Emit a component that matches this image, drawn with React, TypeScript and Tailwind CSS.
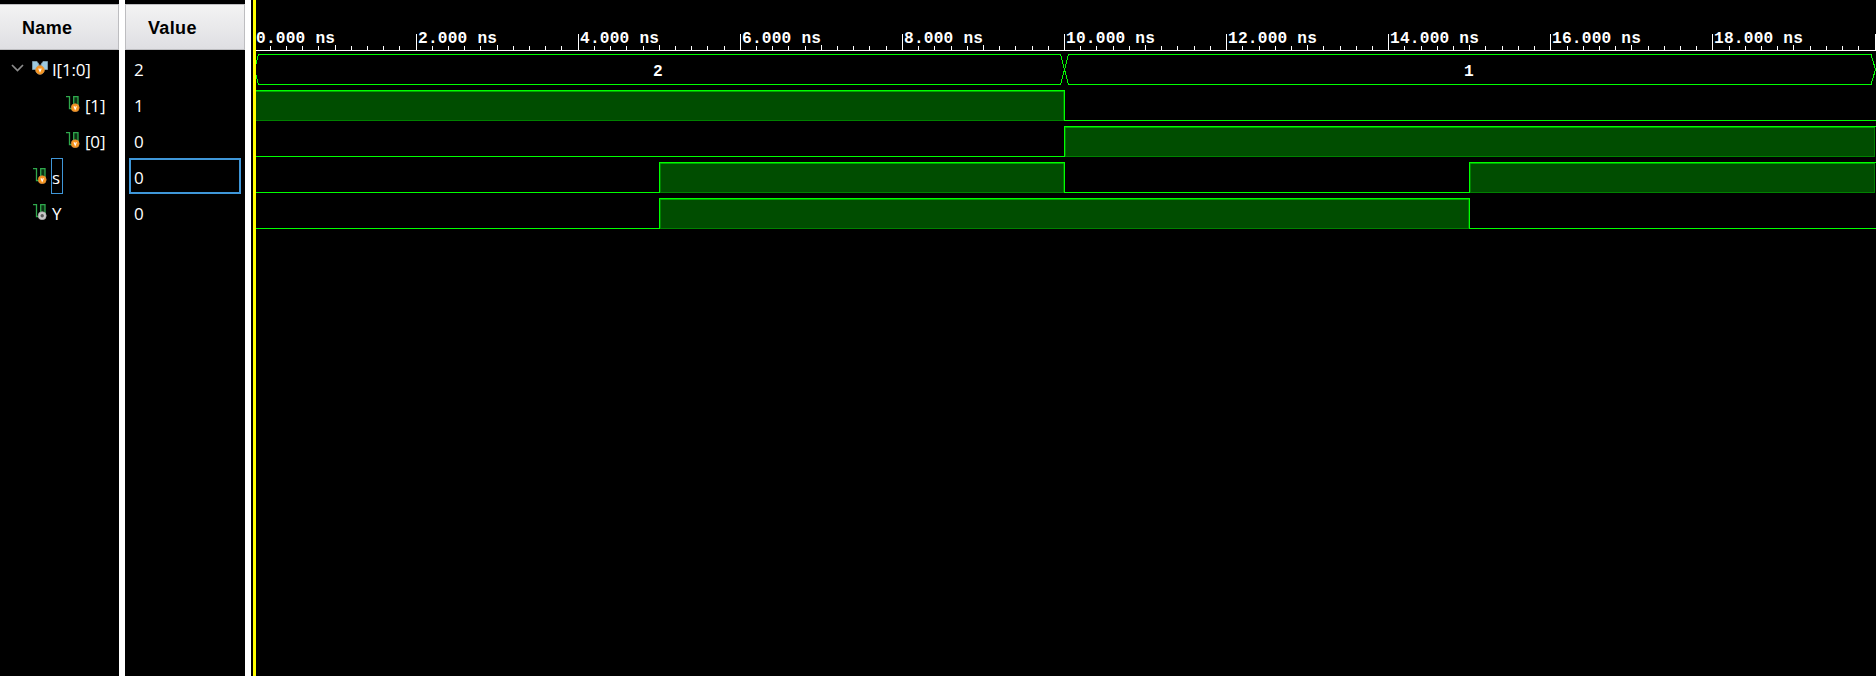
const GREEN = "#00ff00";
const START = 254;
const PX_PER_NS = 81.05;
const xAt = (ns: number) => Math.floor(START + ns * PX_PER_NS) - 256;
const RIGHT = 1620;

type Segment = { from: number; to: number; high: boolean };
type Signal = { name: string; value: string; kind: "bus" | "bit" | "in" | "out"; segments: Segment[] };

const signals: Signal[] = [
  { name: "I[1:0]", value: "2", kind: "bus", segments: [] },
  { name: "[1]", value: "1", kind: "bit", segments: [{ from: 0, to: 10, high: true }, { from: 10, to: 20, high: false }] },
  { name: "[0]", value: "0", kind: "bit", segments: [{ from: 0, to: 10, high: false }, { from: 10, to: 20, high: true }] },
  { name: "s", value: "0", kind: "in", segments: [{ from: 0, to: 5, high: false }, { from: 5, to: 10, high: true }, { from: 10, to: 15, high: false }, { from: 15, to: 20, high: true }] },
  { name: "Y", value: "0", kind: "out", segments: [{ from: 0, to: 5, high: false }, { from: 5, to: 15, high: true }, { from: 15, to: 20, high: false }] },
];

function BusIcon() {
  return (
    <svg className="block shrink-0" width="16" height="14" viewBox="0 0 16 14">
      <path d="M.5.5h4.500L7 3.500v5H.5zM15.500.5H11L9 3.500v5h6.500z" fill="#9cc9e0" stroke="#7894a2" />
      <circle cx="8" cy="9" r="4.400" fill="#f7941e" stroke="#c99a60" strokeWidth=".7" />
      <path d="M6.800 7.500 8 10.300l1.200-2.800" fill="none" stroke="#fff" strokeWidth="1.200" />
    </svg>
  );
}

function BitIcon({ output = false }: { output?: boolean }) {
  return (
    <svg className="block shrink-0" width="15" height="16" viewBox="0 0 15 16">
      <path d="M8 1h4v11H8z" fill="#0b3314" />
      <path d="M0 .7h3.500v12h4.200V.7h4.300v11.800" fill="none" stroke="#2fa84c" strokeWidth="1.300" />
      <circle cx="9.200" cy="11.700" r="4" fill={output ? "#c9c9c9" : "#f7941e"} stroke={output ? "#aaa" : "#d08a3c"} strokeWidth=".7" />
      {output ? (
        <circle cx="9.200" cy="11.700" r="1.700" fill="#5c5c5c" />
      ) : (
        <path d="m8 10.200 1.200 2.900 1.200-2.900" fill="none" stroke="#fff" strokeWidth="1.100" />
      )}
    </svg>
  );
}

function NameRow({ signal }: { signal: Signal }) {
  if (signal.kind === "bus") {
    return (
      <div className="flex h-9 items-center pl-[11px]">
        <svg className="mr-2 block shrink-0" width="13" height="8" viewBox="0 0 13 8">
          <path d="m1 1 5.500 5.500L12 1" fill="none" stroke="#8c8c8c" strokeWidth="1.700" />
        </svg>
        <BusIcon />
        <span className="ml-[4px] pt-[3px]">{signal.name}</span>
      </div>
    );
  }
  return (
    <div className={signal.kind === "bit" ? "flex h-9 items-center pl-[66px]" : "flex h-9 items-center pl-[33px]"}>
      <BitIcon output={signal.kind === "out"} />
      {signal.kind === "in" ? (
        <span className="ml-[3px] flex h-9 w-3 items-center border border-[#3f97d9] pt-[2px]">{signal.name}</span>
      ) : (
        <span className="ml-[4px] pt-[2px]">{signal.name}</span>
      )}
    </div>
  );
}

function Ruler() {
  return (
    <g>
      <rect x="0" y="50" width={RIGHT} height="1" fill="#fff" />
      {Array.from({ length: 100 }, (_, i) => i + 1).map((i) => {
        const top = i % 10 === 0 ? 34 : i % 5 === 0 ? 45 : 46;
        return <rect key={i} x={xAt(i / 5)} y={top} width="1" height={50 - top} fill="#fff" />;
      })}
      {Array.from({ length: 10 }, (_, i) => i * 2).map((ns) => (
        <text key={ns} x={xAt(ns) + 2} y="43" fontSize="16.2" textLength={ns < 10 ? 79 : 89}>
          {ns}.000 ns
        </text>
      ))}
    </g>
  );
}

function BusTrace() {
  const mid = xAt(10) + 0.5;
  return (
    <g fill="none" stroke={GREEN}>
      <path d={`M-1.500 69.500 2.500 54.500H${mid - 4}L${mid + 4} 84.500H${RIGHT - 5}L${RIGHT - 0.5} 69.500`} />
      <path d={`M-1.500 69.500 2.500 84.500H${mid - 4}L${mid + 4} 54.500H${RIGHT - 5}L${RIGHT - 0.5} 69.500`} />
      <g fill="#fff" stroke="none" fontSize="16.2">
        <text x="397" y="76">2</text>
        <text x="1208" y="76">1</text>
      </g>
    </g>
  );
}

function BitTrace({ segments, top }: { segments: Segment[]; top: number }) {
  return (
    <g>
      {segments.map(({ from, to, high }) => {
        const x = from === 0 ? 0 : xAt(from);
        const end = xAt(to);
        if (!high) return <rect key={from} x={x} y={top + 30} width={end - x + 1} height="1" fill={GREEN} />;
        return (
          <g key={from}>
            <rect x={x} y={top} width={end - x} height="31" fill="#004d00" />
            <rect x={x} y={top + 30} width={end - x} height="1" fill="#008000" />
            {from > 0 && <rect x={x + 1} y={top + 1} width="1" height="29" fill="#008000" />}
            <rect x={end - 1} y={top + 1} width="1" height="29" fill="#008000" />
            <rect x={x} y={top + 1} width={end - x} height="1" fill="#00a600" />
            <rect x={x} y={top} width={end - x + 1} height="1" fill={GREEN} />
            {from > 0 && <rect x={x} y={top} width="1" height="31" fill={GREEN} />}
            {to < 20 && <rect x={end} y={top} width="1" height="31" fill={GREEN} />}
          </g>
        );
      })}
    </g>
  );
}

const header =
  "flex h-[46px] items-center border border-[#bdbdc0] bg-linear-to-b from-[#f3f3f3] to-[#dfdfe3] pt-[2px] pl-[22px] font-['Liberation_Sans'] text-[18px] font-bold tracking-[0.35px] text-black";

export default function App() {
  return (
    <main className="flex h-[676px] w-[1876px] overflow-hidden bg-black font-['Open_Sans',sans-serif] text-[17px] leading-none tracking-[-0.2px] text-white">
      <section className="w-[119px] shrink-0 pt-1">
        <div className={`${header} border-l-0`}>Name</div>
        {signals.map((s) => <NameRow key={s.name} signal={s} />)}
      </section>
      <div className="w-[6px] shrink-0 bg-white" />
      <section className="w-[120px] shrink-0 pt-1">
        <div className={header}>Value</div>
        {signals.map((s) =>
          s.name === "s" ? (
            <div key={s.name} className="mx-1 flex h-9 items-center border-2 border-[#3f97d9] pt-[2px] pl-[3px]">{s.value}</div>
          ) : (
            <div key={s.name} className="flex h-9 items-center pt-[2px] pl-[9px]">{s.value}</div>
          ),
        )}
      </section>
      <div className="w-[6px] shrink-0 bg-white" />
      <div className="ml-[2px] w-[3px] shrink-0 bg-[#ffff00]" />
      <svg className="block shrink-0 font-['Liberation_Mono',monospace] font-bold tracking-normal" width="1620" height="676" viewBox="0 0 1620 676" fill="#fff" shapeRendering="crispEdges">
        <Ruler />
        <BusTrace />
        {signals.slice(1).map((s, i) => (
          <BitTrace key={s.name} segments={s.segments} top={90 + i * 36} />
        ))}
      </svg>
    </main>
  );
}
